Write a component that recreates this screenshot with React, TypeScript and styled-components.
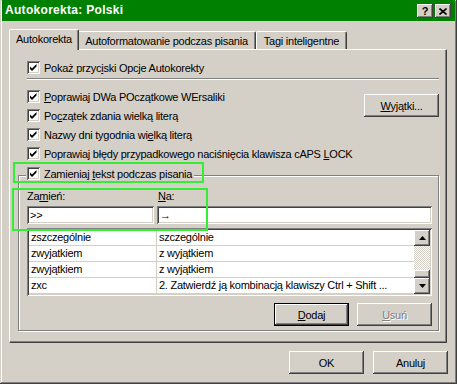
import React from 'react';
import styled, { createGlobalStyle, css } from 'styled-components';

// Colours of the classic Windows look
const FACE = '#D4D0C8';
const SHADOW = '#808080';
const DARK = '#404040';

const GlobalStyle = createGlobalStyle`
  html, body {
    margin: 0;
    padding: 0;
    background: ${FACE};
  }
  * {
    box-sizing: border-box;
  }
`;

const raised = css`
  box-shadow: inset -1px -1px ${DARK}, inset 1px 1px #fff, inset -2px -2px ${SHADOW}, inset 2px 2px ${FACE};
`;

const sunken = css`
  box-shadow: inset 1px 1px ${SHADOW}, inset -1px -1px #fff, inset 2px 2px ${DARK}, inset -2px -2px ${FACE};
`;

// Window frame
const Window = styled.div`
  position: relative;
  width: 457px;
  height: 384px;
  overflow: hidden;
  display: flex;
  flex-direction: column;
  background: ${FACE};
  font-family: "Liberation Sans", Arial, sans-serif;
  font-size: 11px;
  letter-spacing: -0.25px;
  color: #000;
  box-shadow: inset -1px -1px ${DARK}, inset 1px 1px ${FACE}, inset -2px -2px ${SHADOW}, inset 2px 2px #fff;
`;

const TitleBar = styled.div`
  flex-shrink: 0;
  height: 21px;
  margin: 0 2px;
  padding: 0 4px 0 3px;
  display: flex;
  align-items: flex-start;
  background: #008000;
`;

const Title = styled.div`
  flex: 1;
  line-height: 21px;
  font-size: 12px;
  letter-spacing: 0.3px;
  font-weight: bold;
  color: #fff;
`;

const CaptionButtons = styled.div`
  display: flex;
  gap: 2px;
  margin-top: 4px;
`;

const CaptionButton = styled.div`
  width: 16px;
  height: 14px;
  display: flex;
  align-items: center;
  justify-content: center;
  background: ${FACE};
  font-weight: bold;
  font-size: 11px;
  line-height: 14px;
  ${raised};
`;

const Body = styled.div`
  flex: 1;
  display: flex;
  flex-direction: column;
  padding: 8px 10px 0 9px;
`;

// Tabs
const TabStrip = styled.div`
  display: flex;
  align-items: flex-end;
  height: 20px;
  padding-left: 2px;
  position: relative;
  z-index: 1;
`;

const Tab = styled.div<{ $w: number; $active?: boolean }>`
  width: ${(p) => p.$w}px;
  height: 18px;
  display: flex;
  align-items: center;
  justify-content: center;
  white-space: nowrap;
  background: ${FACE};
  border-left: 1px solid #fff;
  border-top: 1px solid #fff;
  border-right: 1px solid ${DARK};
  border-radius: 2px 2px 0 0;
  box-shadow: inset -1px 0 ${SHADOW};
  ${(p) =>
    p.$active &&
    css`
      height: 21px;
      margin: 0 -2px -1px;
      padding-bottom: 2px;
      position: relative;
      z-index: 2;
    `}
`;

const Panel = styled.div`
  height: 294px;
  display: flex;
  flex-direction: column;
  padding: 8px 7px 0 8px;
  border-left: 1px solid #fff;
  border-top: 1px solid #fff;
  border-right: 1px solid ${DARK};
  border-bottom: 1px solid ${DARK};
  box-shadow: inset -1px -1px ${SHADOW};
`;

// Checkboxes
const CheckRow = styled.div<{ $indent?: boolean }>`
  height: 19px;
  display: flex;
  align-items: center;
  gap: 4px;
  white-space: nowrap;
  margin-left: ${(p) => (p.$indent ? 9 : 0)}px;
`;

const Box = styled.span`
  width: 13px;
  height: 13px;
  flex-shrink: 0;
  display: inline-flex;
  background: #fff;
  ${sunken};
`;

const Key = styled.u`
  text-decoration: underline;
  text-underline-offset: 1px;
`;

const Separator = styled.div`
  margin: 1px 0 7px 9px;
  border-top: 1px solid ${SHADOW};
  border-bottom: 1px solid #fff;
`;

const Options = styled.div`
  display: flex;
  justify-content: space-between;
`;

const OptionList = styled.div`
  display: flex;
  flex-direction: column;
`;

// Buttons
const Button = styled.div<{ $default?: boolean; $disabled?: boolean; $top?: number }>`
  width: 75px;
  height: 23px;
  flex-shrink: 0;
  margin-top: ${(p) => p.$top ?? 0}px;
  display: flex;
  align-items: center;
  justify-content: center;
  background: ${FACE};
  ${raised};
  ${(p) =>
    p.$default &&
    css`
      border: 1px solid #000;
    `}
  ${(p) =>
    p.$disabled &&
    css`
      color: ${SHADOW};
      text-shadow: 1px 1px #fff;
    `}
`;

// Group box
const GroupBox = styled.div`
  position: relative;
  margin-top: 12px;
  padding: 14px 6px 4px 8px;
  border: 1px solid ${SHADOW};
  box-shadow: inset 1px 1px #fff, 1px 1px #fff;
`;

const Legend = styled.div`
  position: absolute;
  top: -9px;
  left: 7px;
  height: 13px;
  padding: 0 2px 0 1px;
  display: flex;
  align-items: center;
  gap: 4px;
  background: ${FACE};
  white-space: nowrap;
`;

const FieldGrid = styled.div`
  display: grid;
  grid-template-columns: 127px 1fr;
  column-gap: 3px;
  row-gap: 3px;
`;

const FieldLabel = styled.div<{ $indent?: number }>`
  line-height: 13px;
  padding-left: ${(p) => p.$indent ?? 0}px;
`;

const Field = styled.div`
  height: 18px;
  padding: 0 3px;
  display: flex;
  align-items: center;
  background: #fff;
  white-space: nowrap;
  ${sunken};
`;

const List = styled.div`
  margin-top: 4px;
  height: 68px;
  padding: 2px;
  display: flex;
  background: #fff;
  ${sunken};
`;

const Rows = styled.div`
  flex: 1;
  min-width: 0;
  display: flex;
  flex-direction: column;
`;

const Row = styled.div`
  height: 16px;
  display: grid;
  grid-template-columns: 128px 1fr;
  border-bottom: 1px solid ${FACE};
`;

const Cell = styled.div<{ $first?: boolean }>`
  padding: 0 2px;
  line-height: 15px;
  white-space: nowrap;
  overflow: hidden;
  ${(p) =>
    p.$first &&
    css`
      border-right: 1px solid ${FACE};
    `}
`;

const ScrollBar = styled.div`
  width: 16px;
  display: flex;
  flex-direction: column;
`;

const ScrollButton = styled.div<{ $h: number }>`
  height: ${(p) => p.$h}px;
  display: flex;
  align-items: center;
  justify-content: center;
  background: ${FACE};
  ${raised};
`;

const Track = styled.div`
  flex: 1;
  background-image: conic-gradient(#fff 25%, ${FACE} 0 50%, #fff 0 75%, ${FACE} 0);
  background-size: 2px 2px;
`;

const ButtonRow = styled.div<{ $top: number; $gap: number }>`
  display: flex;
  justify-content: flex-end;
  gap: ${(p) => p.$gap}px;
  margin-top: ${(p) => p.$top}px;
`;

const Footer = styled.div`
  display: flex;
  justify-content: flex-end;
  gap: 9px;
  padding-top: 8px;
  margin-right: -1px;
`;

// Green annotation frames drawn over the dialog
const Marker = styled.div<{ $x: number; $y: number; $w: number; $h: number }>`
  position: absolute;
  left: ${(p) => p.$x}px;
  top: ${(p) => p.$y}px;
  width: ${(p) => p.$w}px;
  height: ${(p) => p.$h}px;
  border: 2px solid #33ee33;
  pointer-events: none;
`;

const Check = () => (
  <Box>
    <svg width="13" height="13" viewBox="0 0 13 13">
      <path d="M3 5.5 L5 7.5 L9.5 3 V5.5 L5 10 L3 8 Z" fill="#000" />
    </svg>
  </Box>
);

const CheckOption: React.FC<{ children: React.ReactNode; indent?: boolean }> = ({ children, indent }) => (
  <CheckRow $indent={indent}>
    <Check />
    <span>{children}</span>
  </CheckRow>
);

const Arrow: React.FC<{ down?: boolean }> = ({ down }) => (
  <svg width="7" height="4" viewBox="0 0 7 4">
    <path d={down ? 'M0 0 H7 L3.5 4 Z' : 'M0 4 H7 L3.5 0 Z'} fill="#000" />
  </svg>
);

const entries = [
  ['zszczególnie', 'szczególnie'],
  ['zwyjatkiem', 'z wyjątkiem'],
  ['zwyjątkiem', 'z wyjątkiem'],
  ['zxc', '2. Zatwierdź ją kombinacją klawiszy Ctrl + Shift ...'],
];

const App: React.FC = () => {
  return (
    <>
      <GlobalStyle />
      <Window>
        <TitleBar>
          <Title>Autokorekta: Polski</Title>
          <CaptionButtons>
            <CaptionButton>?</CaptionButton>
            <CaptionButton>
              <svg width="8" height="7" viewBox="0 0 8 7">
                <path d="M0.5 0.5 L7.5 6.5 M7.5 0.5 L0.5 6.5" stroke="#000" strokeWidth="1.6" />
              </svg>
            </CaptionButton>
          </CaptionButtons>
        </TitleBar>

        <Body>
          <TabStrip>
            <Tab $w={70} $active>Autokorekta</Tab>
            <Tab $w={179}>Autoformatowanie podczas pisania</Tab>
            <Tab $w={91}>Tagi inteligentne</Tab>
          </TabStrip>

          <Panel>
            <CheckOption indent>
              Pokaż przyc<Key>i</Key>ski Opcje Autokorekty
            </CheckOption>
            <Separator />

            <Options>
              <OptionList>
                <CheckOption indent>
                  <Key>P</Key>oprawiaj DWa POczątkowe WErsaliki
                </CheckOption>
                <CheckOption indent>
                  Po<Key>c</Key>zątek zdania wielką literą
                </CheckOption>
                <CheckOption indent>
                  Nazwy dni tygodnia wi<Key>e</Key>lką literą
                </CheckOption>
                <CheckOption indent>
                  Poprawiaj błędy przypadkowego naciśnięcia klawisza cAPS <Key>L</Key>OCK
                </CheckOption>
              </OptionList>
              <Button $top={7}>
                <span>
                  <Key>W</Key>yjątki...
                </span>
              </Button>
            </Options>

            <GroupBox>
              <Legend>
                <Check />
                <span>
                  Zamieniaj <Key>t</Key>ekst podczas pisania
                </span>
              </Legend>

              <FieldGrid>
                <FieldLabel>
                  Za<Key>m</Key>ień:
                </FieldLabel>
                <FieldLabel $indent={1}>
                  <Key>N</Key>a:
                </FieldLabel>
                <Field>&gt;&gt;</Field>
                <Field>→</Field>
              </FieldGrid>

              <List>
                <Rows>
                  {entries.map(([from, to]) => (
                    <Row key={from}>
                      <Cell $first>{from}</Cell>
                      <Cell>{to}</Cell>
                    </Row>
                  ))}
                </Rows>
                <ScrollBar>
                  <ScrollButton $h={16}>
                    <Arrow />
                  </ScrollButton>
                  <Track />
                  <ScrollButton $h={8} />
                  <ScrollButton $h={16}>
                    <Arrow down />
                  </ScrollButton>
                </ScrollBar>
              </List>

              <ButtonRow $top={7} $gap={8}>
                <Button $default>
                  <span>
                    <Key>D</Key>odaj
                  </span>
                </Button>
                <Button $disabled>
                  <span>
                    <Key>U</Key>suń
                  </span>
                </Button>
              </ButtonRow>
            </GroupBox>
          </Panel>

          <Footer>
            <Button>OK</Button>
            <Button>Anuluj</Button>
          </Footer>
        </Body>

        <Marker $x={13} $y={162} $w={191} $h={21} />
        <Marker $x={12} $y={188} $w={196} $h={43} />
      </Window>
    </>
  );
};

export default App;
